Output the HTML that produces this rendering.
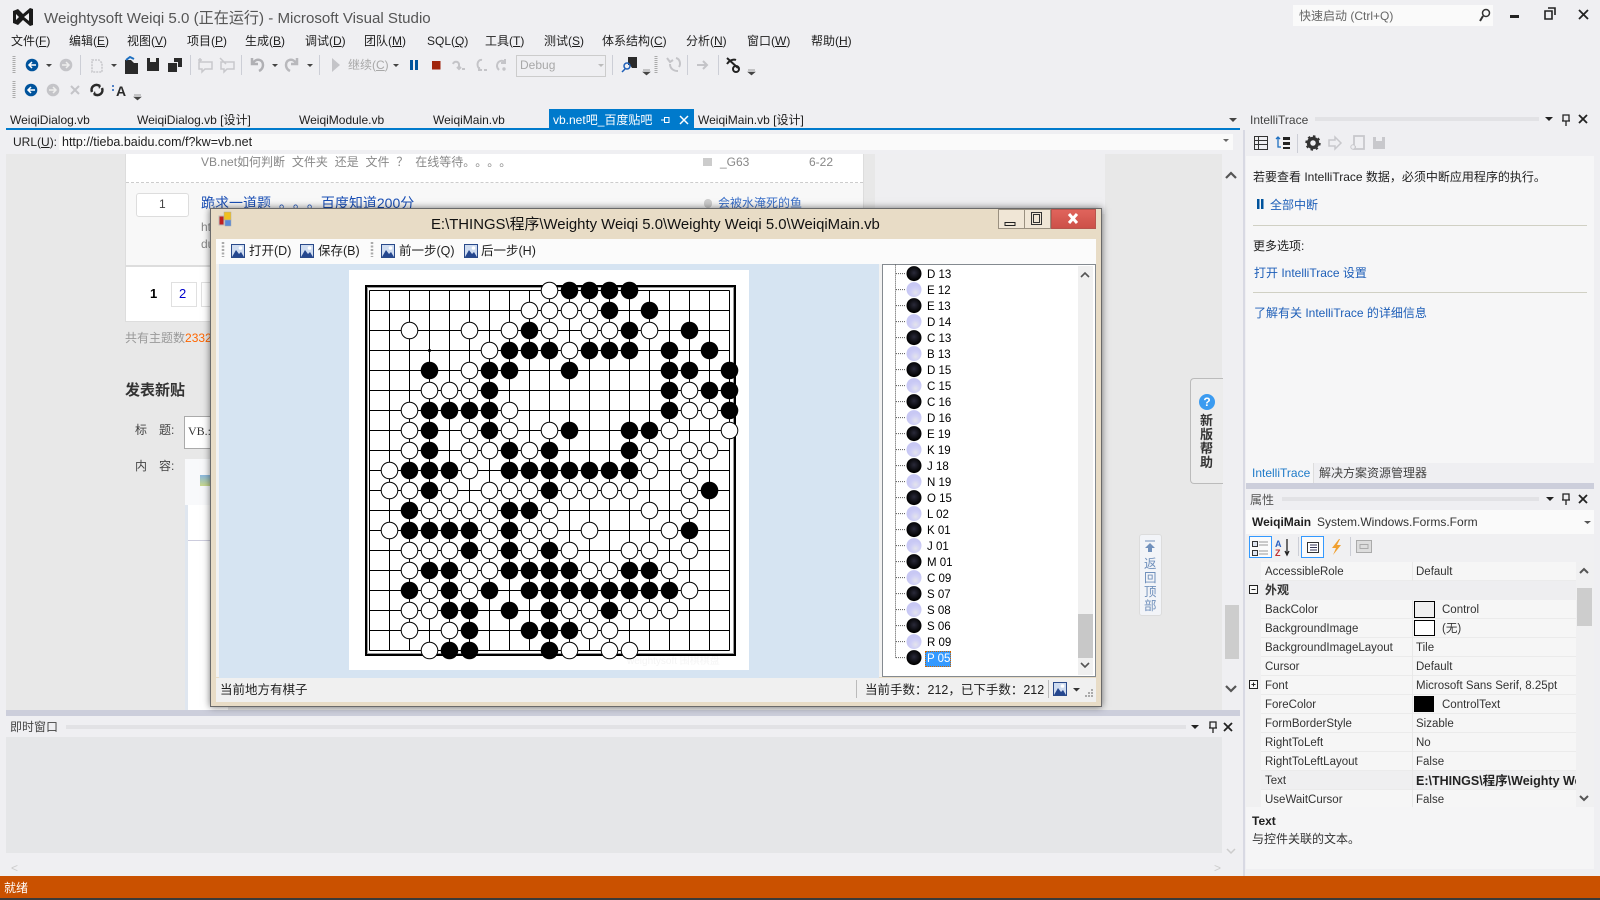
<!DOCTYPE html>
<html lang="zh-CN"><head><meta charset="utf-8"><title>Weightysoft Weiqi 5.0 - Microsoft Visual Studio</title>
<style>
html,body{margin:0;padding:0;width:1600px;height:900px;overflow:hidden;background:#efeff2}
body{position:relative;font:12px/16px "Liberation Sans","Noto Sans CJK SC",sans-serif;color:#1e1e1e;text-spacing-trim:space-all}
i{font-style:normal;position:absolute;white-space:nowrap;line-height:16px}
s{position:absolute;display:block;text-decoration:none}
svg{position:absolute;left:0;top:0;overflow:visible}
.g{color:#888}.l{color:#1e5fb8}.p{font-size:11.5px;color:#333}
.dots{background:radial-gradient(circle,#bdbdc2 0.6px,transparent .8px) 0 0/2px 2px}
</style></head><body>

<!-- browser page -->
<s style="left:6px;top:154px;width:1234px;height:557px;background:#e8e8e8"></s>
<s style="left:875px;top:154px;width:230px;height:60px;background:#efeff1"></s>
<s style="left:1222px;top:154px;width:18px;height:557px;background:#efeff2"></s>
<s style="left:125px;top:154px;width:739px;height:168px;background:#fff;border-right:1px solid #ddd;border-left:1px solid #ddd;box-sizing:border-box"></s>
<s style="left:126px;top:183px;width:737px;height:83px;background:#f8f8f8"></s>
<s style="left:126px;top:182px;width:737px;border-top:1px dashed #ccc"></s>
<s style="left:125px;top:265px;width:739px;height:2px;background:#ddd"></s>
<s style="left:125px;top:321px;width:739px;height:1px;background:#ddd"></s>
<i class="g" style="left:201px;top:154px;word-spacing:3.5px">VB.net如何判断 文件夹 还是 文件 ？ 在线等待。。。。</i>
<i class="g" style="left:720px;top:154px">_G63</i><i class="g" style="left:809px;top:154px">6-22</i>
<s style="left:703px;top:158px;width:9px;height:8px;background:#ccc"></s>
<s style="left:136px;top:193px;width:51px;height:22px;background:#fff;border:1px solid #ddd;border-radius:3px"></s>
<i style="left:159px;top:196px;color:#444">1</i>
<i style="left:201px;top:195px;font-size:14px;color:#1a4fb5;word-spacing:4px">跪求一道题 。。。百度知道200分</i>
<s style="left:704px;top:199px;width:8px;height:9px;background:#ccc;border-radius:4px"></s>
<i style="left:718px;top:195px;color:#3a6fc8">会被水淹死的鱼</i>
<i class="g" style="left:201px;top:219px">ht</i><i class="g" style="left:201px;top:236px">du</i>
<i style="left:150px;top:286px;font-weight:bold;font-size:13px;color:#000">1</i>
<s style="left:171px;top:282px;width:24px;height:23px;background:#fff;border:1px solid #e0e0e0"></s>
<i style="left:179px;top:286px;font-size:13px;color:#00c">2</i>
<s style="left:201px;top:282px;width:20px;height:23px;border:1px solid #e0e0e0"></s>
<i style="left:125px;top:330px;color:#999">共有主题数<span style="color:#f60">2332</span></i>
<i style="left:125px;top:383px;font-weight:bold;font-size:15px;color:#333">发表新贴</i>
<i style="left:135px;top:422px;color:#444">标　题:</i>
<s style="left:184px;top:416px;width:40px;height:31px;background:#fff;border:1px solid #aaa"></s>
<i style="left:188px;top:423px;font-family:'Liberation Serif',serif;color:#333">VB.:</i>
<i style="left:135px;top:458px;color:#444">内　容:</i>
<s style="left:185px;top:459px;width:40px;height:46px;background:#f8f9fb"></s>
<s style="left:200px;top:475px;width:12px;height:11px;background:linear-gradient(#8ab8e0,#c9d88a)"></s>
<s style="left:185px;top:505px;width:40px;height:206px;background:#dfe6ef"></s>
<s style="left:188px;top:505px;width:40px;height:206px;background:#fff"></s>
<s style="left:188px;top:540px;width:40px;height:1px;background:#ccd"></s>
<!-- page help widgets -->
<s style="left:1190px;top:378px;width:33px;height:106px;background:#ececec;border:1px solid #bbb;border-right:0;border-radius:4px 0 0 4px;box-sizing:border-box"></s>
<s style="left:1199px;top:394px;width:16px;height:16px;border-radius:8px;background:#3b9bf0;color:#fff;font:bold 12px/16px 'Liberation Sans',sans-serif;text-align:center">?</s>
<i style="left:1200px;top:414px;width:14px;font-weight:bold;font-size:13px;white-space:normal;color:#333;line-height:14px">新版帮助</i>
<s style="left:1139px;top:534px;width:23px;height:82px;background:#f2f4f8;border:1px solid #dcdcdc;border-radius:3px;box-sizing:border-box"></s>
<i style="left:1144px;top:557px;width:13px;font-size:12.5px;white-space:normal;color:#7090bc;line-height:14px">返回顶部</i>
<s style="left:1225px;top:605px;width:14px;height:54px;background:#cdcdcd"></s>

<!-- immediate -->
<s style="left:6px;top:710px;width:1234px;height:6px;background:#cccedb"></s>
<s style="left:6px;top:737px;width:1234px;height:139px;background:linear-gradient(#e5e6e8,#e5e6e8) 0 0/1216px 116px no-repeat,#efeff2"></s>
<i style="left:10px;top:719px;font-size:12px;color:#444">即时窗口</i>
<s class="dots" style="left:66px;top:725px;width:1120px;height:4px"></s>
<i style="left:11px;top:860px;color:#ccc">&lt;</i><i style="left:1214px;top:860px;color:#ccc">&gt;</i>

<!-- status -->
<s style="left:0;top:876px;width:1600px;height:22px;background:#ca5100"></s>
<s style="left:0;top:898px;width:1600px;height:2px;background:#3a3a3a"></s>
<i style="left:4px;top:880px;color:#fff">就绪</i>

<!-- title -->
<i style="left:44px;top:10px;font-size:15.1px;line-height:18px;color:#555">Weightysoft Weiqi 5.0 (正在运行) - Microsoft Visual Studio</i>
<s style="left:1293px;top:5px;width:200px;height:21px;background:#fafafa"></s>
<i style="left:1299px;top:8px;color:#666">快速启动 (Ctrl+Q)</i>

<!-- menu -->
<i style="left:11px;top:33px">文件(<u>F</u>)</i><i style="left:69px;top:33px">编辑(<u>E</u>)</i><i style="left:127px;top:33px">视图(<u>V</u>)</i><i style="left:187px;top:33px">项目(<u>P</u>)</i><i style="left:245px;top:33px">生成(<u>B</u>)</i><i style="left:305px;top:33px">调试(<u>D</u>)</i><i style="left:364px;top:33px">团队(<u>M</u>)</i><i style="left:427px;top:33px">SQL(<u>Q</u>)</i><i style="left:485px;top:33px">工具(<u>T</u>)</i><i style="left:544px;top:33px">测试(<u>S</u>)</i><i style="left:602px;top:33px">体系结构(<u>C</u>)</i><i style="left:686px;top:33px">分析(<u>N</u>)</i><i style="left:747px;top:33px">窗口(<u>W</u>)</i><i style="left:811px;top:33px">帮助(<u>H</u>)</i>

<!-- toolbar texts -->
<i style="left:348px;top:57px;color:#a8a8a8">继续(<u>C</u>)</i>
<s style="left:516px;top:55px;width:88px;height:20px;border:1px solid #ccc"></s>
<i style="left:520px;top:57px;color:#a8a8a8">Debug</i>

<!-- tabs -->
<s style="left:549px;top:109px;width:145px;height:19px;background:#007acc"></s>
<s style="left:6px;top:128px;width:1234px;height:2px;background:#007acc"></s>
<i style="left:10px;top:112px">WeiqiDialog.vb</i><i style="left:137px;top:112px">WeiqiDialog.vb [设计]</i><i style="left:299px;top:112px">WeiqiModule.vb</i><i style="left:433px;top:112px">WeiqiMain.vb</i>
<i style="left:553px;top:112px;color:#fff">vb.net吧_百度贴吧</i><i style="left:698px;top:112px">WeiqiMain.vb [设计]</i>
<!-- url -->
<i style="left:13px;top:134px">URL(<u>U</u>):</i>
<s style="left:59px;top:134px;width:1174px;height:16px;background:#fafafa"></s>
<i style="left:62px;top:134px;font-size:12.5px">http://tieba.baidu.com/f?kw=vb.net</i>

<!-- right panel -->
<s style="left:1243px;top:130px;width:2px;height:746px;background:#d8d9e3"></s>
<s style="left:1246px;top:156px;width:348px;height:307px;background:#f6f6f7"></s>
<i style="left:1250px;top:112px;color:#444">IntelliTrace</i>
<s class="dots" style="left:1315px;top:117px;width:224px;height:4px"></s>
<i style="left:1253px;top:169px">若要查看 IntelliTrace 数据，必须中断应用程序的执行。</i>
<i class="l" style="left:1270px;top:197px">全部中断</i>
<s style="left:1253px;top:225px;width:334px;height:1px;background:#d0d0c4"></s>
<i style="left:1253px;top:238px">更多选项:</i>
<i class="l" style="left:1254px;top:265px">打开 IntelliTrace 设置</i>
<s style="left:1253px;top:292px;width:334px;height:1px;background:#d0d0c4"></s>
<i class="l" style="left:1254px;top:305px">了解有关 IntelliTrace 的详细信息</i>
<s style="left:1246px;top:463px;width:67px;height:20px;background:#f6f6f7"></s>
<s style="left:1313px;top:463px;width:1px;height:20px;background:#ddd"></s>
<i style="left:1252px;top:465px;color:#1e7ac8">IntelliTrace</i><i style="left:1319px;top:465px;color:#444">解决方案资源管理器</i>
<s style="left:1246px;top:483px;width:348px;height:6px;background:#cccedb"></s>
<i style="left:1250px;top:492px;color:#555">属性</i>
<s class="dots" style="left:1282px;top:497px;width:257px;height:4px"></s>
<s style="left:1246px;top:510px;width:348px;height:24px;background:#fafafa"></s>
<i style="left:1252px;top:514px;font-weight:bold">WeiqiMain</i><i style="left:1317px;top:514px;color:#333">System.Windows.Forms.Form</i>
<s style="left:1246px;top:534px;width:348px;height:28px;background:#f0f0f2"></s>
<s style="left:1249px;top:536px;width:21px;height:20px;border:1px solid #3399ff;background:#fbfbfb"></s>
<s style="left:1301px;top:536px;width:21px;height:20px;border:1px solid #3399ff;background:#fbfbfb"></s>
<!-- property grid -->
<s style="left:1246px;top:562px;width:348px;height:245px;background:#f0f0f1"></s>
<s style="left:1261px;top:562px;width:315px;height:245px;background:repeating-linear-gradient(#f6f6f6 0 18px,#ebebeb 18px 19px)"></s>
<s style="left:1261px;top:771px;width:315px;height:18px;background:#efeff0"></s>
<s style="left:1412px;top:562px;width:1px;height:245px;background:#e8e8e8"></s>
<s style="left:1246px;top:581px;width:330px;height:19px;background:#eeeef0"></s>
<i class="p" style="left:1265px;top:564px">AccessibleRole</i><i class="p" style="left:1416px;top:564px">Default</i>
<i style="left:1265px;top:582px;font-weight:bold;color:#333">外观</i>
<i class="p" style="left:1265px;top:602px">BackColor</i><i class="p" style="left:1442px;top:602px">Control</i>
<i class="p" style="left:1265px;top:621px">BackgroundImage</i><i class="p" style="left:1442px;top:621px">(无)</i>
<i class="p" style="left:1265px;top:640px">BackgroundImageLayout</i><i class="p" style="left:1416px;top:640px">Tile</i>
<i class="p" style="left:1265px;top:659px">Cursor</i><i class="p" style="left:1416px;top:659px">Default</i>
<i class="p" style="left:1265px;top:678px">Font</i><i class="p" style="left:1416px;top:678px">Microsoft Sans Serif, 8.25pt</i>
<i class="p" style="left:1265px;top:697px">ForeColor</i><i class="p" style="left:1442px;top:697px">ControlText</i>
<i class="p" style="left:1265px;top:716px">FormBorderStyle</i><i class="p" style="left:1416px;top:716px">Sizable</i>
<i class="p" style="left:1265px;top:735px">RightToLeft</i><i class="p" style="left:1416px;top:735px">No</i>
<i class="p" style="left:1265px;top:754px">RightToLeftLayout</i><i class="p" style="left:1416px;top:754px">False</i>
<i class="p" style="left:1265px;top:773px">Text</i><i class="p" style="left:1416px;top:773px;font-size:12.5px;font-weight:bold;color:#222;width:160px;overflow:hidden">E:\THINGS\程序\Weighty Weiqi 5.0</i>
<i class="p" style="left:1265px;top:792px">UseWaitCursor</i><i class="p" style="left:1416px;top:792px">False</i>
<s style="left:1414px;top:601px;width:19px;height:15px;background:#f0f0f0;border:1px solid #000"></s>
<s style="left:1414px;top:620px;width:19px;height:14px;background:#fff;border:1px solid #000"></s>
<s style="left:1414px;top:696px;width:20px;height:16px;background:#000"></s>
<s style="left:1577px;top:588px;width:15px;height:38px;background:#cdcdcd"></s>
<s style="left:1246px;top:807px;width:348px;height:62px;background:#f5f5f6"></s>
<i style="left:1252px;top:813px;font-weight:bold">Text</i><i style="left:1252px;top:831px;color:#333">与控件关联的文本。</i>

<!-- icons -->
<svg width="1600" height="900">
<defs>
<symbol id="pic" viewBox="0 0 14 14"><rect x=".5" y=".5" width="13" height="13" fill="#cfdcf0" stroke="#2a4a8a"/><path d="M1 13 5 6l3 4 2-2 3 5z" fill="#25478f"/><circle cx="9.5" cy="4" r="1.8" fill="#fff"/></symbol>
<radialGradient id="sb" cx=".5" cy=".45"><stop offset="0" stop-color="#2a2a3a"/><stop offset="1" stop-color="#000"/></radialGradient>
<radialGradient id="sw" cx=".6" cy=".7"><stop offset="0" stop-color="#e4e4ec"/><stop offset=".6" stop-color="#d0d0f6"/><stop offset="1" stop-color="#c8c8f4"/></radialGradient>
</defs>
<!-- VS logo -->
<path d="M13 11 18 9l5 5 7-6 3 1v16l-3 1-7-6-5 5-5-2zM16 14v6l3-3zM24 17l5 4v-8z" fill="#1a1a1a" fill-rule="evenodd"/>
<!-- window buttons -->
<path d="M1510 15h9v3h-9z" fill="#222"/><path d="M1545 11h7v8h-7zM1548 8h7v7" fill="none" stroke="#222" stroke-width="1.6"/>
<path d="M1579 10l9 9m0-9-9 9" stroke="#222" stroke-width="1.8"/>
<circle cx="1486" cy="13" r="3.5" fill="none" stroke="#333" stroke-width="1.5"/><path d="M1483 16l-3 5" stroke="#333" stroke-width="2"/>
<!-- grips -->
<path d="M14 56v17M14 81v17M656 56v17" stroke="#aaa" stroke-width="3" stroke-dasharray="1 1"/>
<!-- seps -->
<path d="M80.500 55v20M190.500 55v20M241.500 55v20M319.500 55v20M612.500 55v20M687.500 55v20M718.500 55v20M1297.500 134v19M1298.500 537v19M1350.500 537v19" stroke="#ccced6"/>
<!-- nav row 1 -->
<circle cx="32" cy="65" r="6.300" fill="#00539c"/><path d="M36 65h-7m3-3-3 3 3 3" stroke="#fff" stroke-width="1.500" fill="none"/>
<circle cx="66" cy="65" r="6.300" fill="#c4c4c8"/><path d="M62 65h7m-3-3 3 3-3 3" stroke="#eee" stroke-width="1.500" fill="none"/>
<path d="M46 64h6l-3 3zM111 64h6l-3 3zM272 64h6l-3 3zM307 64h6l-3 3zM393 64h6l-3 3z" fill="#444"/>
<path d="M92 60h7l3 3v9h-10z" fill="none" stroke="#c8c8cc" stroke-width="1.600" stroke-dasharray="2 1"/>
<path d="M125 60h6l3 3h4v11h-13z" fill="#2a2a2a"/><path d="M126 60l4-3 4 2" fill="none" stroke="#1e6fc0" stroke-width="2"/>
<path d="M147 58h12v13h-12z" fill="#2a2a2a"/><rect x="150" y="58" width="6" height="4" fill="#eee"/>
<path d="M168 63h9v9h-9z" fill="#2a2a2a"/><path d="M174 58h8v9h-4v-5h-4z" fill="#2a2a2a"/>
<path d="M199 62h13v7h-7l-3 3v-3h-3zM198 60h4m-2-2v4" fill="none" stroke="#c8c8cc" stroke-width="1.500"/>
<path d="M221 62h13v7h-7l-3 3v-3h-3zM220 58l6 6" fill="none" stroke="#c8c8cc" stroke-width="1.500"/>
<path d="M252 58v6h6M253 63c3-5 10-4 10 2 0 3-2 5-4 6" fill="none" stroke="#b0b0b4" stroke-width="2.500"/>
<path d="M297 58v6h-6M296 63c-3-5-10-4-10 2 0 3 2 5 4 6" fill="none" stroke="#b8b8bc" stroke-width="2.500"/>
<path d="M332 58l8 7-8 7z" fill="#c4c4c8"/>
<rect x="410" y="60" width="3" height="10" fill="#00539c"/><rect x="415" y="60" width="3" height="10" fill="#00539c"/>
<rect x="432" y="61" width="8.500" height="8.500" fill="#a1260d"/>
<path d="M453 64c1-3 5-3 6 0v5M457 67l2 2 2-2M462 69h3" fill="none" stroke="#c4c4c8" stroke-width="2"/>
<path d="M482 60c-5-1-6 7-2 9M479 67v3h3M484 70h3" fill="none" stroke="#c4c4c8" stroke-width="2"/>
<path d="M505 62c-4-3-8 0-8 4 0 2 1 3 2 4M505 59v4h-4" fill="none" stroke="#c4c4c8" stroke-width="2"/><circle cx="504" cy="69" r="1.700" fill="#c4c4c8"/>
<path d="M598 64h6l-3 3z" fill="#bbb"/>
<path d="M628 57h9v11h-5l-2-3h-2z" fill="#2a2a2a"/><circle cx="627" cy="66" r="3" fill="none" stroke="#1e5fb8" stroke-width="1.500"/><path d="M625 69l-3 3" stroke="#1e5fb8" stroke-width="1.500"/>
<path d="M643 70h7M643 72h7l-3.500 3z" fill="#444" stroke="#444" stroke-width=".6"/>
<path d="M667 58l3 4 3-2M678 71c-4 0-8-2-8-7M676 58c4 1 5 6 3 9" fill="none" stroke="#c4c4c8" stroke-width="2"/>
<path d="M697 65h10m-4-4 4 4-4 4" fill="none" stroke="#c4c4c8" stroke-width="2"/>
<path d="M727 58l11 10M727 64c4-6 9-4 9-4" fill="none" stroke="#222" stroke-width="2"/><circle cx="736" cy="69" r="3" fill="none" stroke="#222" stroke-width="2"/>
<path d="M748 70h7M748 72h7l-3.500 3z" fill="#444" stroke="#444" stroke-width=".6"/>
<!-- row 2 -->
<circle cx="31" cy="90" r="6.300" fill="#00539c"/><path d="M35 90h-7m3-3-3 3 3 3" stroke="#fff" stroke-width="1.500" fill="none"/>
<circle cx="53" cy="90" r="6.300" fill="#c4c4c8"/><path d="M49 90h7m-3-3 3 3-3 3" stroke="#eee" stroke-width="1.500" fill="none"/>
<path d="M71 86l8 8m0-8-8 8" stroke="#c4c4c8" stroke-width="2"/>
<path d="M92 92c-2-5 3-9 8-6M102 88c2 5-3 9-8 6" fill="none" stroke="#2a2a2a" stroke-width="2.500"/>
<path d="M98 84l3 2-2 3M96 96l-3-2 2-3" fill="#2a2a2a"/>
<path d="M113 85v2m0 2v2" stroke="#1e5fb8" stroke-width="1.500"/>
<text x="116" y="96" font-family="Liberation Sans,sans-serif" font-weight="bold" font-size="14" fill="#2a2a2a">A</text>
<path d="M134 95h7M134 97h7l-3.500 3z" fill="#444" stroke="#444" stroke-width=".6"/>
<!-- tab icons -->
<path d="M661 120h3M664.500 117v6M665 117.500h4v5h-4" fill="none" stroke="#fff"/><path d="M680 116l8 8m0-8-8 8" stroke="#fff" stroke-width="1.500"/>
<path d="M1229 118h8l-4 4z" fill="#444"/><path d="M1223 139h6l-3 3z" fill="#666"/>
<!-- page scroll -->
<path d="M1226 178l5-5 5 5M1226 686l5 5 5-5" fill="none" stroke="#555" stroke-width="2.200"/>
<!-- back to top arrow -->
<path d="M1145 541h10" stroke="#7090bc"/><path d="M1150 543l5 5h-3v4h-4v-4h-3z" fill="#7090bc"/>
<!-- immediate -->
<path d="M1191 725h8l-4 4zM1545 117h8l-4 4zM1546 497h8l-4 4z" fill="#222"/>
<path d="M1210 722h6v6h-6zM1213 728v5M1209 728h8M1563 115h6v6h-6zM1566 121v5M1562 121h8M1563 494h6v6h-6zM1566 500v5M1562 500h8" fill="none" stroke="#222" stroke-width="1.300"/>
<path d="M1224 723l8 8m0-8-8 8M1579 115l8 8m0-8-8 8M1579 495l8 8m0-8-8 8" stroke="#222" stroke-width="1.800"/>
<path d="M1227 849l4 4 4-4" fill="none" stroke="#ccc" stroke-width="1.500"/>
<!-- IntelliTrace toolbar -->
<path d="M1254.500 136.500h13v13h-13zM1254.500 140.500h13M1254.500 144.500h13M1258.500 136.500v13" fill="none" stroke="#333"/>
<path d="M1283 137h7v3h-7zM1283 142h7v3h-7zM1283 147h7v2h-7z" fill="#222"/><path d="M1278 137v10h3M1276 139l2-2 2 2" fill="none" stroke="#1e6fc0" stroke-width="1.300"/>
<circle cx="1313" cy="143" r="4.500" fill="none" stroke="#333" stroke-width="3.500"/><circle cx="1313" cy="143" r="6.800" fill="none" stroke="#333" stroke-width="1.800" stroke-dasharray="2.500 2.800"/>
<path d="M1329 140h6v-3l6 6-6 6v-3h-6z" fill="none" stroke="#c8c8cc" stroke-width="1.500"/>
<path d="M1354 136h10v13h-10zM1351 147h5" fill="none" stroke="#c8c8cc" stroke-width="1.800"/><circle cx="1353" cy="147" r="2.200" fill="#efeff2" stroke="#c8c8cc"/>
<path d="M1373 137h12v12h-12z" fill="#c8c8cc"/><rect x="1376" y="137" width="6" height="4" fill="#efeff2"/>
<rect x="1257" y="199" width="2.500" height="10" fill="#00539c"/><rect x="1261" y="199" width="2.500" height="10" fill="#00539c"/>
<!-- properties toolbar -->
<path d="M1584 521h7l-3.500 3z" fill="#555"/>
<path d="M1252.500 541.500h5v5h-5zM1252.500 550.500h5v5h-5z" fill="#dfe5f0" stroke="#333"/><path d="M1259 542h9M1259 545h9M1259 551h9M1259 554h9" stroke="#999"/>
<text x="1275" y="547" font-family="Liberation Sans,sans-serif" font-size="9" font-weight="bold" fill="#2a60c0">A</text><text x="1275" y="556" font-family="Liberation Sans,sans-serif" font-size="9" font-weight="bold" fill="#c03030">Z</text>
<path d="M1287 539v15m-2-3 2 4 2-4" fill="none" stroke="#222" stroke-width="1.300"/>
<path d="M1307.500 542.500h11v10h-11z" fill="#fff" stroke="#333"/><path d="M1310 545h7M1310 547.500h7M1310 550h7" stroke="#335"/>
<path d="M1339 539l-7 9h4l-3 7 8-10h-4l3-6z" fill="#f0a030"/>
<path d="M1356.500 540.500h15v12h-15z" fill="#ddd" stroke="#aaa"/><path d="M1360 544.500h8v4h-8z" fill="none" stroke="#aaa"/>
<!-- prop grid -->
<path d="M1249.500 585.500h8v8h-8zM1251.500 589.500h4M1249.500 680.500h8v8h-8zM1251.500 684.500h4M1253.500 682.500v4" fill="#f8f8f8" stroke="#222"/>
<path d="M1580 573l4-4 4 4M1580 796l4 4 4-4" fill="none" stroke="#555" stroke-width="2"/>
</svg>

<!-- dialog -->
<s style="left:210px;top:208px;width:892px;height:499px;background:#e8dcc6;border:1px solid #6a6a6a;box-sizing:border-box;box-shadow:0 0 7px rgba(0,0,0,.55)"></s>
<s style="left:216px;top:239px;width:880px;height:25px;background:#fbfbfb"></s>
<s style="left:216px;top:264px;width:880px;height:413px;background:#f2f2f2"></s>
<s style="left:219px;top:264px;width:660px;height:414px;background:#d6e4f2"></s>
<s style="left:349px;top:270px;width:400px;height:400px;background:#fff"></s>
<s style="left:882px;top:264px;width:214px;height:413px;background:#fff;border:1px solid #848a90;box-sizing:border-box"></s>
<s style="left:1078px;top:266px;width:15px;height:409px;background:#f0f0f0"></s>
<s style="left:1078px;top:614px;width:15px;height:44px;background:#c8c8c8"></s>
<s style="left:216px;top:678px;width:880px;height:24px;background:#f0f0f0"></s>
<s style="left:998px;top:209px;width:53px;height:20px;background:#f0e6d6;border:1px solid #9a9080;box-sizing:border-box"></s>
<s style="left:1024px;top:209px;width:1px;height:20px;background:#9a9080"></s>
<s style="left:1051px;top:209px;width:45px;height:20px;background:linear-gradient(#e0645c,#cc5048);border:1px solid #b8544c;box-sizing:border-box"></s>
<i style="left:431px;top:216px;font-size:14.9px;line-height:18px;color:#111">E:\THINGS\程序\Weighty Weiqi 5.0\Weighty Weiqi 5.0\WeiqiMain.vb</i>
<i style="left:249px;top:243px;font-size:12.5px">打开(D)</i><i style="left:318px;top:243px;font-size:12.5px">保存(B)</i><i style="left:399px;top:243px;font-size:12.5px">前一步(Q)</i><i style="left:481px;top:243px;font-size:12.5px">后一步(H)</i>
<i style="left:220px;top:682px;font-size:12.5px">当前地方有棋子</i>
<i style="left:865px;top:682px;font-size:12.5px">当前手数：212，已下手数：212</i>
<i style="left:627px;top:654px;font-size:10px;color:#f4f4f4">weightysoft 围棋棋盘</i>
<div style="position:absolute;left:925px;top:266.6px;font-size:11.5px;line-height:16px;color:#000;white-space:nowrap"><div style="padding-left:2px">D 13</div><div style="padding-left:2px">E 12</div><div style="padding-left:2px">E 13</div><div style="padding-left:2px">D 14</div><div style="padding-left:2px">C 13</div><div style="padding-left:2px">B 13</div><div style="padding-left:2px">D 15</div><div style="padding-left:2px">C 15</div><div style="padding-left:2px">C 16</div><div style="padding-left:2px">D 16</div><div style="padding-left:2px">E 19</div><div style="padding-left:2px">K 19</div><div style="padding-left:2px">J 18</div><div style="padding-left:2px">N 19</div><div style="padding-left:2px">O 15</div><div style="padding-left:2px">L 02</div><div style="padding-left:2px">K 01</div><div style="padding-left:2px">J 01</div><div style="padding-left:2px">M 01</div><div style="padding-left:2px">C 09</div><div style="padding-left:2px">S 07</div><div style="padding-left:2px">S 08</div><div style="padding-left:2px">S 06</div><div style="padding-left:2px">R 09</div><div style="padding-left:2px;background:#3399ff;color:#fff;outline:1px dotted #c60;outline-offset:-1px;width:24px">P 05</div></div>

<svg width="1600" height="900">
<!-- dialog icons -->
<path d="M1005 222.500h10v3h-10z" fill="none" stroke="#222"/><path d="M1033.500 214.500h6v8h-6zM1031.500 212.500h10v12h-10z" fill="none" stroke="#333"/>
<path d="M1069 214l8 9m0-9-8 9" stroke="#fff" stroke-width="3"/>
<rect x="219" y="216" width="5" height="9" fill="#c02020" stroke="#bbb"/><rect x="224" y="212" width="7" height="8" fill="#f0c020" stroke="#aaa" stroke-width=".5"/><rect x="225" y="220" width="6" height="6" fill="#5a8ad8" stroke="#aaa" stroke-width=".5"/>
<path d="M223 242v15M372 242v15" stroke="#aaa" stroke-width="2.500" stroke-dasharray="2 1.500"/>
<use href="#pic" x="231" y="244" width="14" height="14"/><use href="#pic" x="300" y="244" width="14" height="14"/><use href="#pic" x="381" y="244" width="14" height="14"/><use href="#pic" x="464" y="244" width="14" height="14"/><use href="#pic" x="1053" y="682" width="14" height="14"/>
<path d="M1073 688h7l-3.500 3.500z" fill="#333"/>
<path d="M1048.500 680v18M856.500 680v18" stroke="#bbb"/>
<path d="M1085 696h2M1088 696h2M1091 696h2M1088 693h2M1091 693h2M1091 690h2" stroke="#aaa" stroke-width="2"/>
<!-- tree scroll -->
<path d="M1081 277l4-4 4 4M1081 663l4 4 4-4" fill="none" stroke="#555" stroke-width="1.600"/>
<!-- tree lines -->
<g transform="translate(0,.6)">
<path d="M895.500 264v394M896 273h10M896 289h10M896 305h10M896 321h10M896 337h10M896 353h10M896 369h10M896 385h10M896 401h10M896 417h10M896 433h10M896 449h10M896 465h10M896 481h10M896 497h10M896 513h10M896 529h10M896 545h10M896 561h10M896 577h10M896 593h10M896 609h10M896 625h10M896 641h10M896 657h10" stroke="#555" stroke-dasharray="1 1" fill="none"/>
<g fill="url(#sb)"><circle cx="914" cy="273" r="7.500"/><circle cx="914" cy="305" r="7.500"/><circle cx="914" cy="337" r="7.500"/><circle cx="914" cy="369" r="7.500"/><circle cx="914" cy="401" r="7.500"/><circle cx="914" cy="433" r="7.500"/><circle cx="914" cy="465" r="7.500"/><circle cx="914" cy="497" r="7.500"/><circle cx="914" cy="529" r="7.500"/><circle cx="914" cy="561" r="7.500"/><circle cx="914" cy="593" r="7.500"/><circle cx="914" cy="625" r="7.500"/><circle cx="914" cy="657" r="7.500"/></g>
<g fill="url(#sw)"><circle cx="914" cy="289" r="7.500"/><circle cx="914" cy="321" r="7.500"/><circle cx="914" cy="353" r="7.500"/><circle cx="914" cy="385" r="7.500"/><circle cx="914" cy="417" r="7.500"/><circle cx="914" cy="449" r="7.500"/><circle cx="914" cy="481" r="7.500"/><circle cx="914" cy="513" r="7.500"/><circle cx="914" cy="545" r="7.500"/><circle cx="914" cy="577" r="7.500"/><circle cx="914" cy="609" r="7.500"/><circle cx="914" cy="641" r="7.500"/></g>
</g>
<!-- board -->
<rect x="366" y="286" width="369" height="369" fill="none" stroke="#000" stroke-width="2"/>
<rect x="367.500" y="287.500" width="366" height="366" fill="none" stroke="#999" stroke-width="1"/>
<g transform="translate(369.500,290.500)">
<path d="M0 0H360M0 20H360M0 40H360M0 60H360M0 80H360M0 100H360M0 120H360M0 140H360M0 160H360M0 180H360M0 200H360M0 220H360M0 240H360M0 260H360M0 280H360M0 300H360M0 320H360M0 340H360M0 360H360M0 0V360M20 0V360M40 0V360M60 0V360M80 0V360M100 0V360M120 0V360M140 0V360M160 0V360M180 0V360M200 0V360M220 0V360M240 0V360M260 0V360M280 0V360M300 0V360M320 0V360M340 0V360M360 0V360" stroke="#000" fill="none"/>
<circle cx="60" cy="60" r="1.500" fill="#000"/>
<path fill="none" stroke="#000" stroke-width="17.600" stroke-linecap="round" d="M200 0h0M220 0h0M240 0h0M260 0h0M240 20h0M280 20h0M160 40h0M260 40h0M320 40h0M140 60h0M160 60h0M180 60h0M220 60h0M240 60h0M260 60h0M300 60h0M340 60h0M60 80h0M120 80h0M140 80h0M200 80h0M300 80h0M320 80h0M360 80h0M120 100h0M300 100h0M340 100h0M360 100h0M60 120h0M80 120h0M100 120h0M120 120h0M300 120h0M360 120h0M60 140h0M120 140h0M200 140h0M260 140h0M280 140h0M60 160h0M140 160h0M180 160h0M260 160h0M40 180h0M60 180h0M80 180h0M140 180h0M160 180h0M180 180h0M200 180h0M220 180h0M240 180h0M260 180h0M60 200h0M180 200h0M340 200h0M40 220h0M140 220h0M160 220h0M40 240h0M60 240h0M80 240h0M100 240h0M140 240h0M320 240h0M100 260h0M140 260h0M180 260h0M60 280h0M80 280h0M140 280h0M160 280h0M180 280h0M200 280h0M260 280h0M280 280h0M40 300h0M80 300h0M120 300h0M160 300h0M180 300h0M200 300h0M220 300h0M240 300h0M260 300h0M280 300h0M300 300h0M80 320h0M100 320h0M140 320h0M180 320h0M240 320h0M100 340h0M160 340h0M180 340h0M200 340h0M80 360h0M100 360h0M180 360h0"/>
<path fill="none" stroke="#000" stroke-width="17.600" stroke-linecap="round" d="M180 0h0M160 20h0M180 20h0M200 20h0M220 20h0M40 40h0M100 40h0M140 40h0M180 40h0M220 40h0M240 40h0M280 40h0M120 60h0M200 60h0M100 80h0M60 100h0M80 100h0M100 100h0M320 100h0M40 120h0M140 120h0M320 120h0M340 120h0M40 140h0M100 140h0M140 140h0M180 140h0M300 140h0M360 140h0M40 160h0M100 160h0M120 160h0M160 160h0M280 160h0M320 160h0M340 160h0M20 180h0M100 180h0M280 180h0M320 180h0M20 200h0M40 200h0M80 200h0M120 200h0M140 200h0M160 200h0M200 200h0M220 200h0M240 200h0M260 200h0M320 200h0M60 220h0M80 220h0M100 220h0M120 220h0M180 220h0M280 220h0M320 220h0M20 240h0M120 240h0M160 240h0M180 240h0M220 240h0M300 240h0M40 260h0M60 260h0M80 260h0M120 260h0M160 260h0M200 260h0M260 260h0M280 260h0M320 260h0M40 280h0M100 280h0M120 280h0M220 280h0M240 280h0M300 280h0M60 300h0M100 300h0M320 300h0M40 320h0M60 320h0M200 320h0M220 320h0M260 320h0M280 320h0M300 320h0M40 340h0M80 340h0M220 340h0M240 340h0M60 360h0M200 360h0M240 360h0M260 360h0"/>
<path fill="none" stroke="#fff" stroke-width="15.600" stroke-linecap="round" d="M180 0h0M160 20h0M180 20h0M200 20h0M220 20h0M40 40h0M100 40h0M140 40h0M180 40h0M220 40h0M240 40h0M280 40h0M120 60h0M200 60h0M100 80h0M60 100h0M80 100h0M100 100h0M320 100h0M40 120h0M140 120h0M320 120h0M340 120h0M40 140h0M100 140h0M140 140h0M180 140h0M300 140h0M360 140h0M40 160h0M100 160h0M120 160h0M160 160h0M280 160h0M320 160h0M340 160h0M20 180h0M100 180h0M280 180h0M320 180h0M20 200h0M40 200h0M80 200h0M120 200h0M140 200h0M160 200h0M200 200h0M220 200h0M240 200h0M260 200h0M320 200h0M60 220h0M80 220h0M100 220h0M120 220h0M180 220h0M280 220h0M320 220h0M20 240h0M120 240h0M160 240h0M180 240h0M220 240h0M300 240h0M40 260h0M60 260h0M80 260h0M120 260h0M160 260h0M200 260h0M260 260h0M280 260h0M320 260h0M40 280h0M100 280h0M120 280h0M220 280h0M240 280h0M300 280h0M60 300h0M100 300h0M320 300h0M40 320h0M60 320h0M200 320h0M220 320h0M260 320h0M280 320h0M300 320h0M40 340h0M80 340h0M220 340h0M240 340h0M60 360h0M200 360h0M240 360h0M260 360h0"/>
</g>
</svg>
</body></html>
